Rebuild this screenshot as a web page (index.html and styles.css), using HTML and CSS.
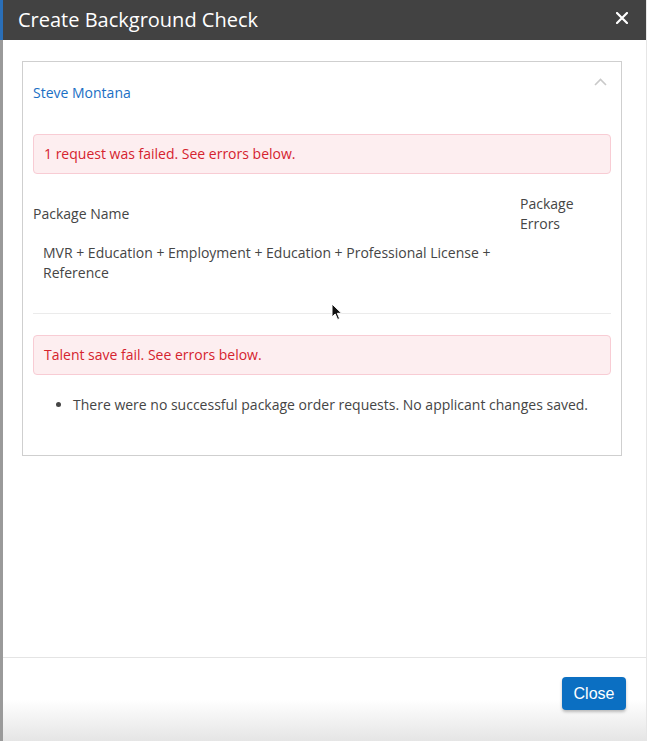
FILE: index.html
```html
<!DOCTYPE html>
<html lang="en">
<head>
  <meta charset="UTF-8">
  <meta name="viewport" content="width=device-width, initial-scale=1.0">
  <title>Create Background Check</title>
  <link rel="stylesheet" href="styles.css">
</head>
<body>
  <div class="modal">
    <div class="modal-header">
      <h1>Create Background Check</h1>
      <button class="modal-x" aria-label="Close">
        <svg width="12" height="12" viewBox="0 0 12 12"><path d="M1 1L11 11M11 1L1 11" stroke="#fff" stroke-width="2.2" stroke-linecap="round"/></svg>
      </button>
    </div>

    <div class="modal-body">
      <div class="card">
        <div class="card-head">
          <a class="applicant" href="#">Steve Montana</a>
          <svg class="chevron" width="13" height="8" viewBox="0 0 13 8"><path d="M1 7L6.5 1.5L12 7" fill="none" stroke="#c9c9c9" stroke-width="1.6"/></svg>
        </div>

        <div class="alert">1 request was failed. See errors below.</div>

        <table class="packages">
          <thead>
            <tr>
              <th class="col-name">Package Name</th>
              <th class="col-errors">Package Errors</th>
            </tr>
          </thead>
          <tbody>
            <tr>
              <td class="col-name">MVR + Education + Employment + Education + Professional License + Reference</td>
              <td class="col-errors"></td>
            </tr>
          </tbody>
        </table>

        <div class="alert">Talent save fail. See errors below.</div>

        <ul class="errors">
          <li>There were no successful package order requests. No applicant changes saved.</li>
        </ul>
      </div>
    </div>

    <div class="modal-footer">
      <button class="btn-close">Close</button>
    </div>

    <svg class="cursor" width="12" height="18" viewBox="0 0 12 18"><path d="M1 1L1 14L4.2 11L6.6 16.5L8.6 15.6L6.3 10.3L10.6 10.3Z" fill="#111" stroke="#fff" stroke-width="1"/></svg>
  </div>
</body>
</html>
```

FILE: styles.css
```css
html, body {
  margin: 0;
  height: 100%;
}
body {
  font-family: "Open Sans", "Noto Sans", sans-serif;
  background: linear-gradient(to bottom, #2a6fb8 0, #2a6fb8 40px, #9a9a9a 40px);
  overflow: hidden;
}
.modal {
  position: relative;
  margin-left: 3px;
  width: 643px;
  height: 741px;
  background: #fff;
  border-right: 1px solid #e6e6e6;
  display: flex;
  flex-direction: column;
}
.modal-header {
  height: 40px;
  background: #424242;
  display: flex;
  align-items: center;
  justify-content: space-between;
  padding: 0 18px 0 15px;
  flex-shrink: 0;
}
.modal-header h1 {
  margin: 0;
  color: #fff;
  font-size: 20px;
  font-weight: 400;
  line-height: 40px;
}
.modal-x {
  background: none;
  border: none;
  padding: 0;
  display: flex;
  cursor: pointer;
  margin-top: -5px;
}
.modal-body {
  flex: 1;
  padding: 21px 0 0 19px;
}
.card {
  width: 600px;
  box-sizing: border-box;
  border: 1px solid #cfcfcf;
  padding: 0 10px 40px;
  color: #454545;
  font-size: 14px;
  line-height: 20px;
}
.card-head {
  display: flex;
  justify-content: space-between;
  align-items: flex-start;
  padding-top: 21px;
}
.applicant {
  color: #1a6fc4;
  text-decoration: none;
}
.chevron {
  margin: -5px 4px 0 0;
}
.alert {
  margin-top: 31px;
  padding: 9px 10px;
  background: #fdeef0;
  border: 1px solid #f8ccd4;
  border-radius: 4px;
  color: #d5232e;
}
.packages {
  width: 100%;
  border-collapse: collapse;
  margin-top: 20px;
  table-layout: fixed;
}
.packages th {
  font-weight: 400;
  text-align: left;
  vertical-align: middle;
  padding: 0;
}
.packages .col-errors {
  width: 81px;
}
.packages th.col-errors {
  padding-right: 10px;
}
.packages td {
  padding: 9px 0 30px 10px;
  border-bottom: 1px solid #ebebeb;
  vertical-align: top;
}
.packages td.col-name {
  padding-right: 12px;
}
.packages + .alert {
  margin-top: 21px;
}
.errors {
  margin: 20px 0 0;
  padding-left: 40px;
}
.modal-footer {
  height: 84px;
  box-sizing: border-box;
  border-top: 1px solid #e4e4e4;
  padding: 19px 20px 0;
  display: flex;
  justify-content: flex-end;
  align-items: flex-start;
  background: linear-gradient(to bottom, #fff 0, #fff 50%, #e5e5e5 100%);
  flex-shrink: 0;
}
.btn-close {
  width: 64px;
  height: 33px;
  border: none;
  border-radius: 4px;
  background: #0b6fc2;
  color: #fff;
  font-family: "Liberation Sans", Arial, sans-serif;
  font-size: 16px;
  cursor: pointer;
  box-shadow: 0 2px 3px rgba(0, 0, 0, 0.25);
}
.cursor {
  position: absolute;
  left: 328px;
  top: 303px;
}
```
